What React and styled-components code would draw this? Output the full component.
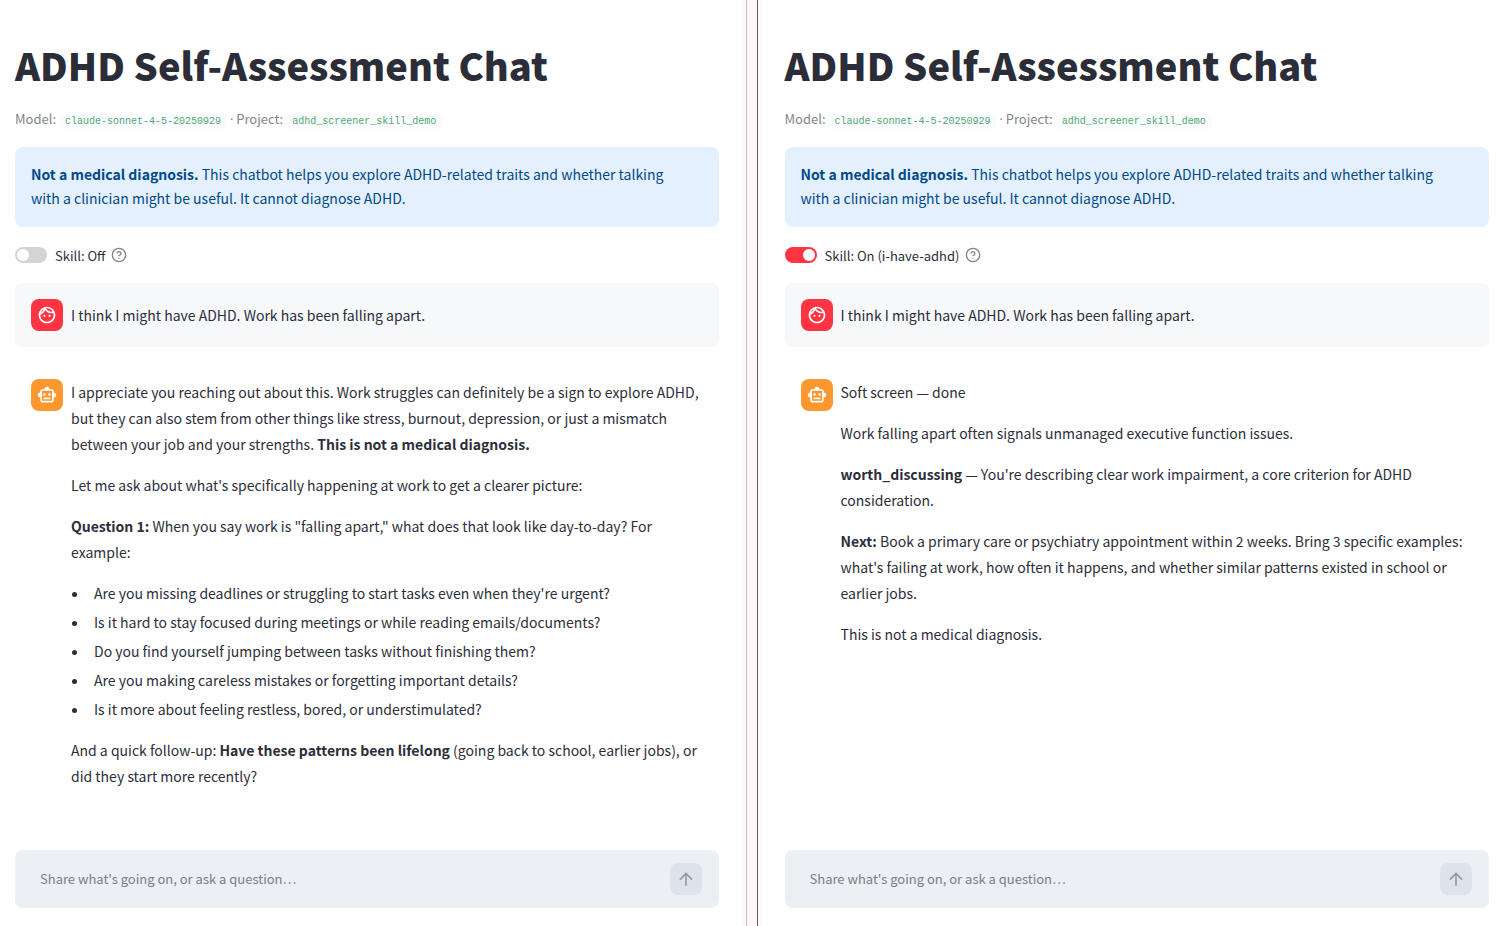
import { useState } from 'react';
import styled, { createGlobalStyle } from 'styled-components';
import { MdOutlineFace, MdOutlineSmartToy, MdArrowUpward } from 'react-icons/md';
import { FiHelpCircle } from 'react-icons/fi';

const GlobalStyle = createGlobalStyle`
  *, *::before, *::after {
    box-sizing: border-box;
  }
  body {
    margin: 0;
    background: #ffffff;
    color: #2c2e3a;
    font-family: 'Noto Sans CJK SC', sans-serif;
    font-size: 14px;
  }
`;

const Comparison = styled.main`
  display: grid;
  grid-template-columns: minmax(0, 1fr) 20px minmax(0, 1fr);
  min-height: 100vh;
`;

const Divider = styled.div`
  display: flex;
  justify-content: space-between;
  padding: 0 4px;
  background: #fff6f7;
`;

const DividerLine = styled.span`
  width: 1px;
  background: ${({ $dark }) => ($dark ? '#6b5a5d' : '#c9b8bb')};
`;

const Panel = styled.section`
  display: flex;
  flex-direction: column;
  padding: ${({ $side }) => ($side === 'left' ? '38px 23px 18px 15px' : '38px 14px 18px 23px')};
`;

const Title = styled.h1`
  margin: 0;
  color: #2b2d38;
  font-size: 38px;
  font-weight: 900;
  line-height: 54px;
`;

const Caption = styled.p`
  margin: 16px 0 14px;
  font-size: 13px;
  line-height: 22px;
  color: #83848c;
`;

const Dot = styled.span`
  font-family: 'Open Sans', sans-serif;
`;

const Code = styled.code`
  padding: 2px 6px;
  border-radius: 4px;
  background: #fafbfc;
  color: #4fa876;
  font-family: 'Liberation Mono', monospace;
  font-size: 10px;
`;

const Notice = styled.p`
  margin: 0;
  padding: 15px 32px 17px 16px;
  border-radius: 8px;
  background: #e4f0fd;
  color: #004a8c;
  line-height: 24px;
`;

const SkillRow = styled.div`
  display: flex;
  align-items: center;
  gap: 6px;
  height: 24px;
  margin: 16px 0;
`;

const SkillLabel = styled.label`
  display: flex;
  align-items: center;
  gap: 8px;
  font-size: 13px;
`;

const Toggle = styled.input`
  appearance: none;
  display: flex;
  align-items: center;
  width: 32px;
  height: 16px;
  margin: 0;
  padding: 2px;
  border-radius: 8px;
  background: #d3d4d6;
  cursor: pointer;
  &::before {
    content: '';
    width: 12px;
    height: 12px;
    border-radius: 50%;
    background: #ffffff;
  }
  &:checked {
    justify-content: flex-end;
    background: #ff3543;
  }
`;

const HelpButton = styled.button`
  display: flex;
  padding: 0;
  border: 0;
  background: none;
  color: #83848c;
`;

const Message = styled.article`
  display: flex;
  align-items: ${({ $user }) => ($user ? 'center' : 'flex-start')};
  gap: 8px;
  margin-bottom: 16px;
  padding: 16px 8px 16px 16px;
  border-radius: 8px;
  background: ${({ $user }) => ($user ? '#f7f8fa' : 'transparent')};
`;

const Avatar = styled.div`
  display: flex;
  flex: none;
  align-items: center;
  justify-content: center;
  width: 32px;
  height: 32px;
  border-radius: 8px;
  background: ${({ $user }) => ($user ? '#ff3543' : '#ff9730')};
  color: #ffffff;
`;

const MessageBody = styled.div`
  display: flex;
  flex-direction: column;
  gap: 15px;
  min-width: 0;
  line-height: 26px;
  p {
    margin: 0;
  }
  ul {
    display: flex;
    flex-direction: column;
    gap: 3px;
    margin: 0;
    padding-left: 18px;
  }
  li {
    padding-left: 5px;
  }
`;

const ChatForm = styled.form`
  display: flex;
  align-items: center;
  height: 58px;
  margin-top: auto;
  padding: 0 17px 0 25px;
  border-radius: 8px;
  background: #eceff4;
`;

const ChatField = styled.input`
  flex: 1;
  min-width: 0;
  padding: 0 0 2px;
  border: 0;
  outline: 0;
  background: none;
  color: #31333f;
  font-family: inherit;
  font-size: 13px;
  &::placeholder {
    color: #7b7e86;
    opacity: 1;
  }
`;

const SendButton = styled.button`
  display: flex;
  align-items: center;
  justify-content: center;
  width: 32px;
  height: 32px;
  padding: 0;
  border: 0;
  border-radius: 8px;
  background: #dde3eb;
  color: #969aa3;
`;

const ChatPanel = ({ side, skillOn, children }) => {
  const [enabled, setEnabled] = useState(skillOn);

  return (
    <Panel $side={side}>
      <Title>ADHD Self-Assessment Chat</Title>
      <Caption>
        Model: <Code>claude-sonnet-4-5-20250929</Code> <Dot>·</Dot> Project:{' '}
        <Code>adhd_screener_skill_demo</Code>
      </Caption>
      <Notice>
        <strong>Not a medical diagnosis.</strong> This chatbot helps you explore ADHD-related traits
        and whether talking with a clinician might be useful. It cannot diagnose ADHD.
      </Notice>
      <SkillRow>
        <SkillLabel>
          <Toggle type="checkbox" checked={enabled} onChange={(e) => setEnabled(e.target.checked)} />
          {enabled ? 'Skill: On (i-have-adhd)' : 'Skill: Off'}
        </SkillLabel>
        <HelpButton type="button" aria-label="Help">
          <FiHelpCircle size={16} />
        </HelpButton>
      </SkillRow>
      <Message $user>
        <Avatar $user>
          <MdOutlineFace size={20} />
        </Avatar>
        <MessageBody>
          <p>I think I might have ADHD. Work has been falling apart.</p>
        </MessageBody>
      </Message>
      <Message>
        <Avatar>
          <MdOutlineSmartToy size={20} />
        </Avatar>
        <MessageBody>{children}</MessageBody>
      </Message>
      <ChatForm onSubmit={(e) => e.preventDefault()}>
        <ChatField
          aria-label="Message"
          placeholder="Share what's going on, or ask a question…"
        />
        <SendButton type="submit" aria-label="Send">
          <MdArrowUpward size={20} />
        </SendButton>
      </ChatForm>
    </Panel>
  );
};

const App = () => (
  <>
    <GlobalStyle />
    <Comparison>
      <ChatPanel side="left" skillOn={false}>
        <p>
          I appreciate you reaching out about this. Work struggles can definitely be a sign to
          explore ADHD, but they can also stem from other things like stress, burnout, depression,
          or just a mismatch between your job and your strengths.{' '}
          <strong>This is not a medical diagnosis.</strong>
        </p>
        <p>Let me ask about what's specifically happening at work to get a clearer picture:</p>
        <p>
          <strong>Question 1:</strong> When you say work is "falling apart," what does that look
          like day-to-day? For example:
        </p>
        <ul>
          <li>Are you missing deadlines or struggling to start tasks even when they're urgent?</li>
          <li>Is it hard to stay focused during meetings or while reading emails/documents?</li>
          <li>Do you find yourself jumping between tasks without finishing them?</li>
          <li>Are you making careless mistakes or forgetting important details?</li>
          <li>Is it more about feeling restless, bored, or understimulated?</li>
        </ul>
        <p>
          And a quick follow-up: <strong>Have these patterns been lifelong</strong> (going back to
          school, earlier jobs), or did they start more recently?
        </p>
      </ChatPanel>
      <Divider>
        <DividerLine />
        <DividerLine $dark />
      </Divider>
      <ChatPanel side="right" skillOn>
        <p>Soft screen — done</p>
        <p>Work falling apart often signals unmanaged executive function issues.</p>
        <p>
          <strong>worth_discussing</strong> — You're describing clear work impairment, a core
          criterion for ADHD consideration.
        </p>
        <p>
          <strong>Next:</strong> Book a primary care or psychiatry appointment within 2 weeks. Bring
          3 specific examples: what's failing at work, how often it happens, and whether similar
          patterns existed in school or earlier jobs.
        </p>
        <p>This is not a medical diagnosis.</p>
      </ChatPanel>
    </Comparison>
  </>
);

export default App;
